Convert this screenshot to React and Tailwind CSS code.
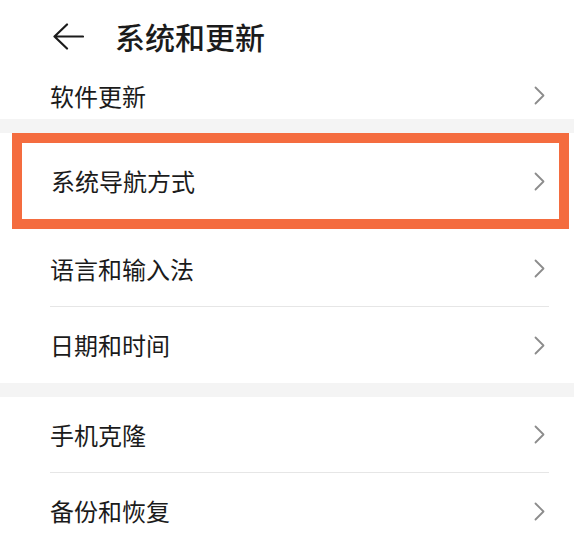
import React from "react";

function Chevron() {
  return (
    <svg width="11" height="19" viewBox="0 0 11 19" fill="none">
      <path d="M1.5 1.5 L9.5 9.5 L1.5 17.5" stroke="#8c8c8c" strokeWidth="1.8" strokeLinecap="round" strokeLinejoin="round" />
    </svg>
  );
}

function BackArrow() {
  return (
    <svg width="31" height="27" viewBox="0 0 31 27" fill="none">
      <path d="M14 1.5 L1.5 13.5 L14 25.5 M1.5 13.5 H30" stroke="#1b1b1b" strokeWidth="2.2" strokeLinecap="round" strokeLinejoin="round" />
    </svg>
  );
}

function Row({ label, divider }) {
  return (
    <div className="pl-[50px] pr-[25px]">
      <div className={`flex h-[76px] items-center justify-between pr-[4px] ${divider ? "border-b border-[#e6e6e6]" : ""}`}>
        <span className="text-[24px] leading-none">{label}</span>
        <Chevron />
      </div>
    </div>
  );
}

export default function App() {
  return (
    <div className="h-[535px] w-[574px] overflow-hidden bg-white font-['Noto_Sans_CJK_SC','Noto_Sans',sans-serif] text-[#1b1b1b]">
      <div className="flex h-[72px] items-center gap-[31px] pl-[53px]">
        <BackArrow />
        <h1 className="text-[30px] font-medium leading-none">系统和更新</h1>
      </div>

      <div className="flex h-[47px] items-center justify-between pl-[50px] pr-[29px]">
        <span className="text-[24px] leading-none">软件更新</span>
        <Chevron />
      </div>

      <div className="h-[14px] bg-[#f4f4f4]" />

      <div className="ml-[12px] mr-[5px] flex h-[96px] items-center justify-between border-[10px] border-[#f46c3f] pl-[29px] pr-[14px]">
        <span className="text-[24px] leading-none">系统导航方式</span>
        <Chevron />
      </div>

      <div className="pt-[2px]">
        <Row label="语言和输入法" divider />
        <Row label="日期和时间" />
      </div>

      <div className="h-[14px] bg-[#f4f4f4]" />

      <Row label="手机克隆" divider />
      <Row label="备份和恢复" />
    </div>
  );
}
